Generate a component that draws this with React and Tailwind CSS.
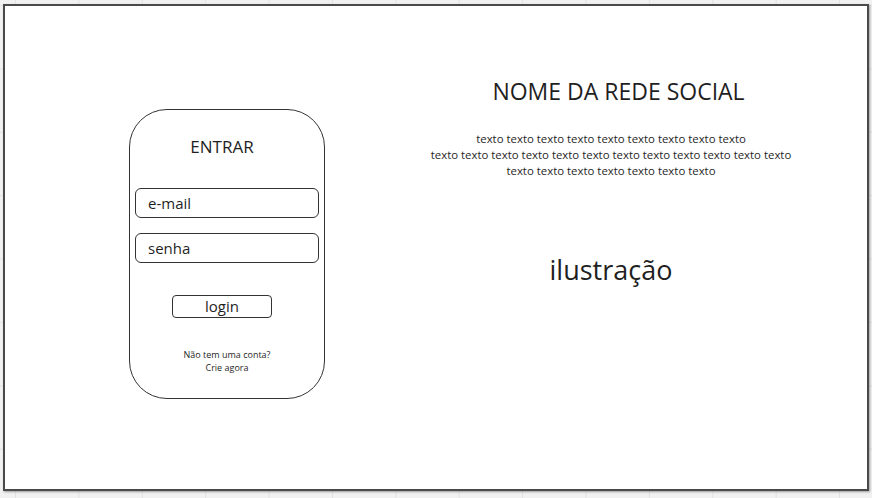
export default function App() {
  const lines = [
    "texto texto texto texto texto texto texto texto texto",
    "texto texto texto texto texto texto texto texto texto texto texto texto",
    "texto texto texto texto texto texto texto",
  ]

  return (
    <div className="w-[872px] h-[498px] overflow-hidden bg-[#f1f1f1] bg-[linear-gradient(to_right,#e2e2e2_1px,transparent_1px),linear-gradient(to_bottom,#e2e2e2_1px,transparent_1px)] bg-[size:63.4px_63.4px] bg-[position:15px_5px] pl-[3px] pt-[4px] font-['Open_Sans',sans-serif] text-[#1f1f1f]">
      {/* Canvas frame */}
      <div className="w-[866px] h-[487px] bg-white border-2 border-[#4a4a4a] shadow-[1px_1px_2px_rgba(0,0,0,0.35)] flex">
        {/* Login card */}
        <div className="pl-[124px] pt-[103px]">
          <div className="w-[196px] h-[290px] border border-[#333] rounded-[38px] px-[5px] flex flex-col">
            <div className="mt-[25px] text-[17px] leading-[24px] text-center pr-[10px]">ENTRAR</div>
            <div className="mt-[29px] h-[30px] border border-[#333] rounded-[6px] pl-[12px] flex items-center text-[15px]">
              e-mail
            </div>
            <div className="mt-[15px] h-[30px] border border-[#333] rounded-[6px] pl-[12px] flex items-center text-[15px]">
              senha
            </div>
            <div className="mt-[32px] ml-[37px] w-[100px] h-[23px] border border-[#333] rounded-[4px] flex items-center justify-center text-[15px]">
              login
            </div>
            <div className="mt-[30px] text-[9px] leading-[13px] text-center">
              <div>Não tem uma conta?</div>
              <div>Crie agora</div>
            </div>
          </div>
        </div>

        {/* Right side */}
        <div className="ml-[75px] w-[422px] flex flex-col items-center">
          <h1 className="mt-[70px] pl-[15px] text-[23px] leading-[31px]">NOME DA REDE SOCIAL</h1>
          <div className="mt-[24px] text-[11.4px] leading-[16px] text-center">
            {lines.map((line, i) => (
              <div key={i}>{line}</div>
            ))}
          </div>
          <div className="mt-[73px] text-[27px] leading-[36px]">ilustração</div>
        </div>
      </div>
    </div>
  )
}
